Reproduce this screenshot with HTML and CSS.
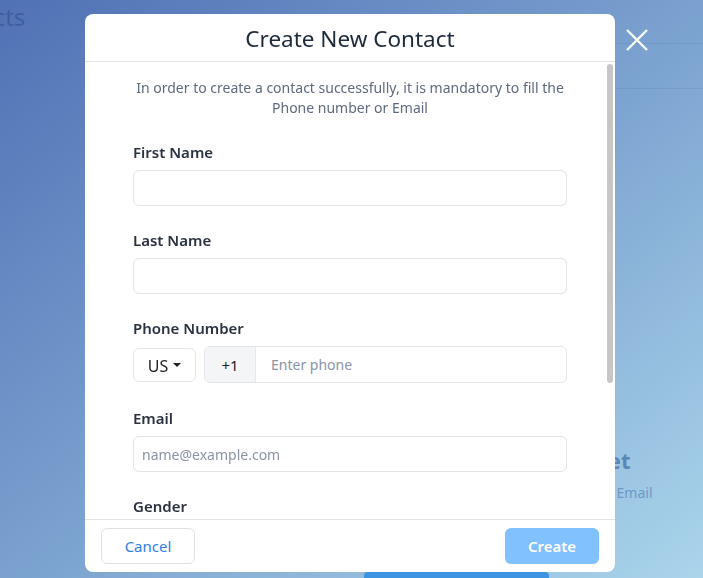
FILE: index.html
```html
<!DOCTYPE html>
<html lang="en">
<head>
<meta charset="utf-8">
<title>Create New Contact</title>
<link rel="stylesheet" href="styles.css">
</head>
<body>
<div class="page">
  <header class="page-header">
    <h1 class="page-title">Contacts</h1>
  </header>
  <div class="page-toolbar"></div>
  <section class="empty-state">
    <h2 class="empty-title">You have no contacts yet</h2>
    <p class="empty-text">Add contacts with a Phone number or Email</p>
    <div class="empty-button"></div>
  </section>
</div>

<div class="overlay">
  <div class="modal">
    <div class="modal-header">
      <h2 class="modal-title">Create New Contact</h2>
    </div>
    <div class="modal-main">
      <div class="modal-body">
        <p class="intro">In order to create a contact successfully, it is mandatory to fill the<br>Phone number or Email</p>

        <div class="field">
          <label class="label">First Name</label>
          <input class="input" type="text">
        </div>

        <div class="field">
          <label class="label">Last Name</label>
          <input class="input" type="text">
        </div>

        <div class="field field-phone">
          <label class="label">Phone Number</label>
          <div class="phone-row">
            <div class="country">US <span class="caret"></span></div>
            <div class="phone-group">
              <span class="addon">+1</span>
              <input class="phone-input" type="text" placeholder="Enter phone">
            </div>
          </div>
        </div>

        <div class="field">
          <label class="label">Email</label>
          <input class="input" type="text" placeholder="name@example.com">
        </div>

        <div class="field">
          <label class="label">Gender</label>
          <div class="gender-box"></div>
        </div>
      </div>
      <div class="scrollbar"><div class="thumb"></div></div>
    </div>
    <div class="modal-footer">
      <button class="btn btn-cancel">Cancel</button>
      <button class="btn btn-create">Create</button>
    </div>
  </div>
  <button class="close" aria-label="Close">
    <svg width="22" height="22" viewBox="0 0 22 22"><path d="M1 1 L21 21 M21 1 L1 21" stroke="#fff" stroke-width="2.4" fill="none"/></svg>
  </button>
</div>
</body>
</html>
```

FILE: styles.css
```css
* { box-sizing: border-box; }
html, body {
  margin: 0;
  width: 703px;
  height: 578px;
  overflow: hidden;
  font-family: "Noto Sans", "Open Sans", sans-serif;
}

.page {
  width: 703px;
  height: 578px;
  overflow: hidden;
  background: linear-gradient(to bottom right, #5071b5 0%, #7aa1cf 50%, #aad5eb 100%);
  display: flex;
  flex-direction: column;
}
.page-header {
  flex: none;
  height: 44px;
  border-bottom: 1px solid rgba(70, 100, 160, 0.14);
  margin-left: 300px;
  display: flex;
  align-items: flex-start;
}
.page-title {
  margin: 1px 0 0 -373px;
  font-size: 24px;
  font-weight: 400;
  line-height: 32px;
  color: rgba(50, 80, 145, 0.6);
  white-space: nowrap;
}
.page-toolbar {
  flex: none;
  height: 45px;
  margin-left: 300px;
  border-bottom: 1px solid rgba(70, 100, 160, 0.14);
}
.empty-state {
  flex: none;
  display: flex;
  flex-direction: column;
  align-items: center;
  margin-left: 210px;
  margin-top: 356px;
}
.empty-title {
  width: 348px;
  text-align: right;
  margin: 0;
  font-size: 22px;
  font-weight: 700;
  color: #5a86b8;
  line-height: 30px;
  white-space: nowrap;
}
.empty-text {
  width: 392px;
  text-align: right;
  margin: 8px 0 0;
  font-size: 14px;
  line-height: 19px;
  color: #6f98c5;
  white-space: nowrap;
}
.empty-button {
  width: 185px;
  height: 40px;
  margin-top: 70px;
  background: #3d94e0;
  border-radius: 4px;
}

.overlay {
  position: fixed;
  inset: 0;
  padding: 14px 0 0 85px;
}
.modal {
  width: 530px;
  height: 558px;
  background: #fff;
  border-radius: 8px;
  display: flex;
  flex-direction: column;
  overflow: hidden;
}
.modal-header {
  height: 48px;
  border-bottom: 1px solid #e4e4e6;
  display: flex;
  align-items: center;
  justify-content: center;
  flex: none;
}
.modal-title {
  margin: 0;
  font-size: 22.5px;
  font-weight: 400;
  color: #1d2a3a;
  padding-top: 2px;
}
.modal-main {
  flex: 1;
  min-height: 0;
  display: flex;
}
.modal-body {
  flex: 1;
  overflow: hidden;
  padding: 16px 38px 40px 48px;
}
.scrollbar {
  flex: none;
  width: 10px;
  padding: 2px;
}
.thumb {
  height: 319px;
  background: #c6c6c6;
  border-radius: 3px;
}

.intro {
  margin: 0 0 25px;
  text-align: center;
  font-size: 14px;
  line-height: 20px;
  color: #5f6b7c;
}
.field {
  display: flex;
  flex-direction: column;
  margin-bottom: 25px;
}
.field-phone { margin-bottom: 26px; }
.label {
  font-size: 15px;
  line-height: 20px;
  font-weight: 600;
  color: #2b3240;
  margin-bottom: 7px;
  margin-top: -1px;
  padding-bottom: 1px;
}
.input {
  height: 36px;
  border: 1px solid #e1e3e8;
  border-radius: 6px;
  padding: 0 8px;
  font-family: inherit;
  font-size: 14px;
  color: #2b3240;
  outline: none;
}
.input::placeholder, .phone-input::placeholder { color: #8b94a4; }

.phone-row {
  display: flex;
  align-items: center;
  gap: 8px;
}
.country {
  width: 63px;
  height: 34px;
  border: 1px solid #e3e5ea;
  border-radius: 6px;
  display: flex;
  align-items: center;
  justify-content: center;
  gap: 5px;
  font-size: 16px;
  color: #222;
  padding-top: 2px;
}
.caret {
  width: 0;
  height: 0;
  border-left: 4px solid transparent;
  border-right: 4px solid transparent;
  border-top: 4px solid #222;
  margin-top: -2px;
}
.phone-group {
  flex: 1;
  height: 37px;
  display: flex;
  border: 1px solid #e1e3e8;
  border-radius: 6px;
  overflow: hidden;
}
.addon {
  width: 51px;
  background: #f4f5f7;
  border-right: 1px solid #e6e8ec;
  display: flex;
  align-items: center;
  justify-content: center;
  font-size: 15px;
  color: #222;
}
.phone-input {
  flex: 1;
  min-width: 0;
  border: 0;
  outline: none;
  padding: 0 15px;
  font-family: inherit;
  font-size: 14px;
}

.gender-box {
  height: 36px;
}

.modal-footer {
  flex: none;
  height: 53px;
  border-top: 1px solid #e4e4e6;
  display: flex;
  justify-content: space-between;
  align-items: center;
  padding: 0 16px;
}
.btn {
  width: 94px;
  height: 36px;
  border-radius: 6px;
  font-family: inherit;
  font-size: 15px;
  line-height: 20px;
  padding: 0;
  cursor: pointer;
}
.btn-cancel {
  background: #fff;
  border: 1px solid #dfe1e6;
  color: #2f7fe6;
}
.btn-create {
  background: #80c1fe;
  border: 0;
  color: #fff;
  font-weight: 600;
}

.close {
  position: absolute;
  left: 626px;
  top: 29px;
  width: 22px;
  height: 22px;
  padding: 0;
  border: 0;
  background: none;
  display: flex;
}
```
